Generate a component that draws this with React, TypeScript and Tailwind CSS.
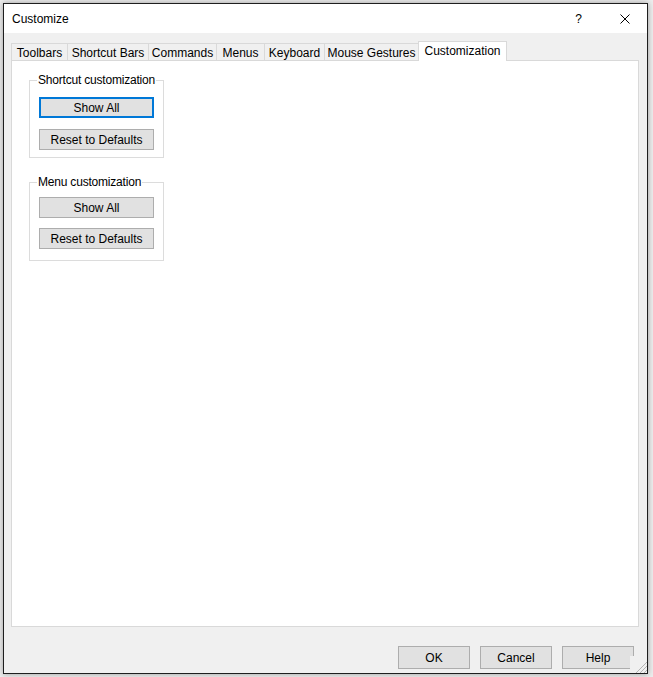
import React from "react";

const font = { fontFamily: '"Segoe UI", "Liberation Sans", Arial, sans-serif' };

const tabs = [
  { label: "Toolbars", w: "w-[56px]" },
  { label: "Shortcut Bars", w: "w-[81px]" },
  { label: "Commands", w: "w-[68px]" },
  { label: "Menus", w: "w-[48px]" },
  { label: "Keyboard", w: "w-[60px]" },
  { label: "Mouse Gestures", w: "w-[94px]" },
];

const WinButton = ({ children, focused = false, className = "" }: { children: React.ReactNode; focused?: boolean; className?: string }) => (
  <button
    className={
      "flex h-[21px] w-[115px] items-center justify-center bg-[#e1e1e1] text-[12px] leading-none text-black " +
      (focused ? "border-2 border-[#0078d7] " : "border border-[#adadad] ") +
      className
    }
  >
    {children}
  </button>
);

const GroupBox = ({ title, children, className = "" }: { title: string; children: React.ReactNode; className?: string }) => (
  <fieldset className={"w-[135px] min-w-0 border border-[#dcdcdc] px-[9px] " + className}>
    <legend className="-ml-[2px] whitespace-nowrap px-[1px] text-[12px] leading-[16px] tracking-[-0.2px] text-black">{title}</legend>
    {children}
  </fieldset>
);

export default function App() {
  return (
    <div className="h-[677px] w-[653px] bg-[#ededed] pl-[3px] pt-[3px]" style={font}>
      <div className="relative flex h-[671px] w-[645px] flex-col border border-[#1e1e1e] bg-[#f0f0f0] shadow-[0_0_6px_rgba(0,0,0,0.35)]">
        {/* title bar */}
        <div className="flex h-[29px] shrink-0 items-center bg-white">
          <span className="ml-[8px] text-[12px] text-black">Customize</span>
          <span className="ml-auto mr-[38px] text-[12px] text-black">?</span>
          <svg width="10" height="10" viewBox="0 0 10 10" className="mr-[17px]">
            <path d="M0.5 0.5 L9.5 9.5 M9.5 0.5 L0.5 9.5" stroke="#000" strokeWidth="1" />
          </svg>
        </div>

        {/* body */}
        <div className="flex flex-1 flex-col px-[7px] pt-[8px]">
          <div className="flex h-[19px] items-end">
            {tabs.map((t) => (
              <div
                key={t.label}
                className={
                  "flex h-[17px] items-center justify-center border-l border-t border-[#d9d9d9] pt-[2px] text-[12px] leading-none text-black " +
                  t.w
                }
              >
                {t.label}
              </div>
            ))}
            <div className="relative z-10 -mb-px flex h-[20px] w-[89px] items-start justify-center border-x border-t border-[#d9d9d9] bg-white pt-[3px] text-[12px] leading-none text-black">
              Customization
            </div>
          </div>

          <div className="h-[567px] w-[628px] border border-[#d9d9d9] bg-white pl-[17px] pt-[11px]">
            <GroupBox title="Shortcut customization" className="h-[86px]">
              <WinButton focused className="mt-[9px]">Show All</WinButton>
              <WinButton className="mt-[11px]">Reset to Defaults</WinButton>
            </GroupBox>
            <GroupBox title="Menu customization" className="mt-[16px] h-[87px]">
              <WinButton className="mt-[7px]">Show All</WinButton>
              <WinButton className="mt-[10px]">Reset to Defaults</WinButton>
            </GroupBox>
          </div>

          <div className="mt-[19px] flex justify-end gap-[10px] pr-[6px]">
            {["OK", "Cancel", "Help"].map((b) => (
              <button
                key={b}
                className="flex h-[23px] w-[72px] items-center justify-center border border-[#adadad] bg-[#e1e1e1] text-[12px] leading-none text-black"
              >
                {b}
              </button>
            ))}
          </div>
        </div>

        {/* size grip */}
        <div className="absolute bottom-0 right-0 flex h-[17px] w-[17px] items-end justify-end bg-[#f0f0f0]">
          <svg width="12" height="12" viewBox="0 0 12 12">
            {[
              [10, 2], [10, 6], [10, 10], [6, 6], [6, 10], [2, 10],
              [8, 4], [8, 8], [4, 8], [11, 1], [11, 5], [11, 9], [7, 5], [7, 9], [3, 9],
              [9, 3], [9, 7], [5, 7], [1, 11], [5, 11], [9, 11],
            ].map(([x, y], i) => (
              <rect key={i} x={x} y={y} width="1" height="1" fill="#b4b4b4" />
            ))}
          </svg>
        </div>
      </div>
    </div>
  );
}
